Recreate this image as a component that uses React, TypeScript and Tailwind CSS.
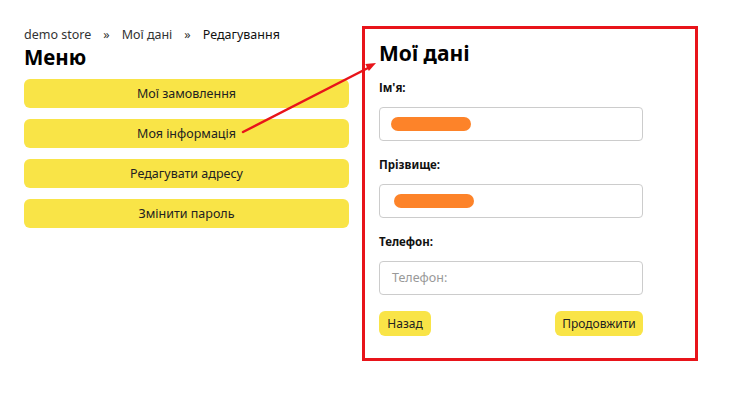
const menuItems = ["Мої замовлення", "Моя інформація", "Редагувати адресу", "Змінити пароль"];

function Field({ label, placeholder, blur }: { label: string; placeholder?: string; blur?: string }) {
  return (
    <div className="flex flex-col">
      <label className="text-[11.5px] font-bold leading-[20px] text-[#111]">{label}</label>
      <div className="mt-[9px] h-[34px] w-[264px] rounded-[4px] border border-[#cccccc] bg-white flex items-center px-[12px]">
        {blur !== undefined ? (
          <div className={`h-[14px] w-[80px] rounded-full bg-[#fd8329] ${blur}`} />
        ) : (
          <span className="text-[12.5px] text-[#999]">{placeholder}</span>
        )}
      </div>
    </div>
  );
}

export default function App() {
  return (
    <div className="relative w-[748px] h-[407px] bg-white text-[#222]" style={{ fontFamily: '"Noto Sans", "Open Sans", sans-serif' }}>
      <div className="flex gap-[13px] pl-[24px] pt-[26px]">
        <div className="w-[325px]">
          <div className="text-[12.5px] leading-[17px] text-[#333]">
            <span>demo store</span>
            <span className="px-[12px]">»</span>
            <span>Мої дані</span>
            <span className="px-[12px]">»</span>
            <span className="text-[#111]">Редагування</span>
          </div>
          <h2 className="mt-[2px] text-[20.5px] font-bold leading-[25px] text-black">Меню</h2>
          <div className="mt-[9px] flex flex-col gap-[11px]">
            {menuItems.map((item) => (
              <button
                key={item}
                className="h-[29px] w-full rounded-[6px] bg-[#f9e447] pt-[2px] text-[12.5px] text-[#222]"
              >
                {item}
              </button>
            ))}
          </div>
        </div>

        <div className="w-[336px] h-[335px] border-[3px] border-[#e8141a] px-[14px] pt-[10px]">
          <h2 className="text-[21px] font-bold leading-[28px] text-black">Мої дані</h2>
          <div className="mt-[11px] flex flex-col gap-[14px]">
            <Field label="Ім'я:" blur="ml-[-1px]" />
            <Field label="Прізвище:" blur="ml-[2px]" />
            <Field label="Телефон:" placeholder="Телефон:" />
          </div>
          <div className="mt-[16px] w-[264px] flex justify-between">
            <button className="h-[25px] w-[52px] rounded-[6px] bg-[#f9e447] text-[12px] text-[#222]">Назад</button>
            <button className="h-[25px] w-[88px] rounded-[6px] bg-[#f9e447] text-[12px] text-[#222]">Продовжити</button>
          </div>
        </div>
      </div>

      <svg className="absolute left-0 top-0 pointer-events-none" width="748" height="407">
        <line x1="243" y1="132" x2="368" y2="68" stroke="#e8141a" strokeWidth="2.5" strokeLinecap="round" />
        <polygon points="376,63 368.9,71.1 365.3,64" fill="#e8141a" />
      </svg>
    </div>
  );
}
